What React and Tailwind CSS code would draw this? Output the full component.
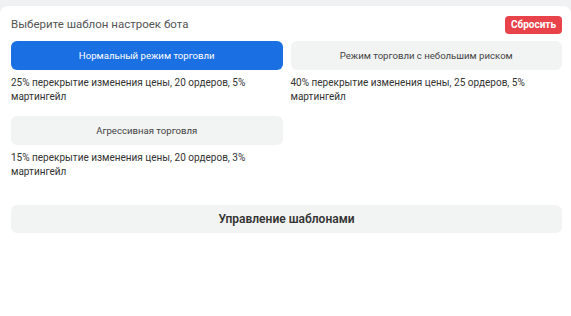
import React, { useState } from "react";

const templates = [
  {
    id: "normal",
    name: "Нормальный режим торговли",
    desc: "25% перекрытие изменения цены, 20 ордеров, 5% мартингейл",
  },
  {
    id: "low",
    name: "Режим торговли с небольшим риском",
    desc: "40% перекрытие изменения цены, 25 ордеров, 5% мартингейл",
  },
  {
    id: "aggressive",
    name: "Агрессивная торговля",
    desc: "15% перекрытие изменения цены, 20 ордеров, 3% мартингейл",
  },
];

function App() {
  const [selected, setSelected] = useState("normal");

  return (
    <div className="min-h-screen bg-[#f0f1f3] pt-[6px] font-['Roboto','Liberation_Sans',sans-serif]">
      <div className="bg-white rounded-t-lg min-h-[310px] pl-[11px] pr-[9px] pt-[10px]">
        {/* HEADER */}
        <div className="flex items-center justify-between h-[17px]">
          <h2 className="text-[11.5px] text-[#555] leading-none mt-[1px]">Выберите шаблон настроек бота</h2>
          <button className="h-[18px] px-[6px] bg-[#e8434b] text-white text-[10px] font-bold rounded-[4px] leading-none">
            Сбросить
          </button>
        </div>

        {/* TEMPLATES */}
        <div className="grid grid-cols-2 gap-x-[8px] gap-y-[12px] mt-[8px]">
          {templates.map((t) => (
            <div key={t.id}>
              <button
                onClick={() => setSelected(t.id)}
                className={
                  "w-full h-[29px] rounded-[6px] text-[9.6px] leading-none " +
                  (selected === t.id ? "bg-[#1a6fe3] text-white" : "bg-[#f2f3f3] text-[#444]")
                }
              >
                {t.name}
              </button>
              <p className="text-[10px] leading-[14px] text-[#333] mt-[6px] pr-[30px]">{t.desc}</p>
            </div>
          ))}
        </div>

        {/* MANAGE */}
        <button className="w-full h-[28px] mt-[26px] bg-[#f2f3f3] rounded-[6px] text-[12px] font-semibold text-[#333]">
          Управление шаблонами
        </button>
      </div>
    </div>
  );
}

export default App;
